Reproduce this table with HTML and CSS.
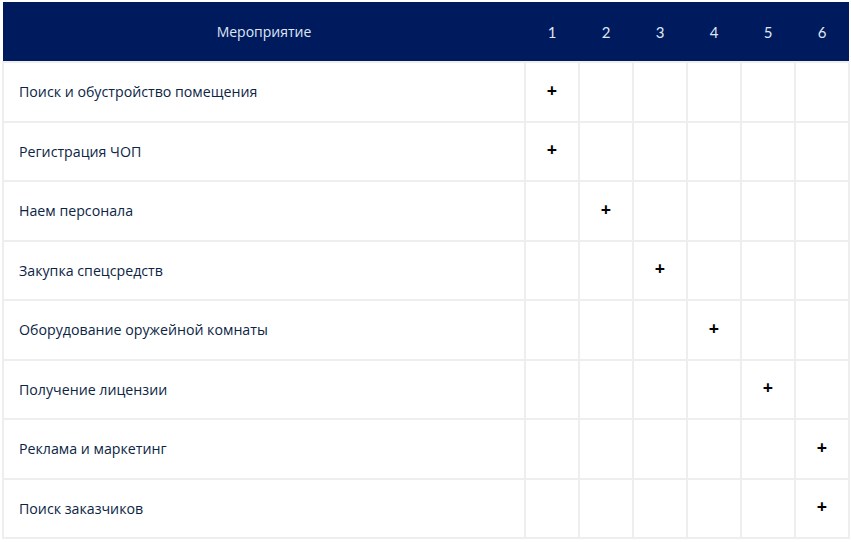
FILE: index.html
```html
<!DOCTYPE html>
<html lang="ru">
<head>
<meta charset="utf-8">
<link rel="stylesheet" href="styles.css">
</head>
<body>
<table class="plan">
  <thead>
    <tr>
      <th class="name-col">Мероприятие</th>
      <th>1</th><th>2</th><th>3</th><th>4</th><th>5</th><th>6</th>
    </tr>
  </thead>
  <tbody>
    <tr><td class="name">Поиск и обустройство помещения</td><td class="mark">+</td><td></td><td></td><td></td><td></td><td></td></tr>
    <tr><td class="name">Регистрация ЧОП</td><td class="mark">+</td><td></td><td></td><td></td><td></td><td></td></tr>
    <tr><td class="name">Наем персонала</td><td></td><td class="mark">+</td><td></td><td></td><td></td><td></td></tr>
    <tr><td class="name">Закупка спецсредств</td><td></td><td></td><td class="mark">+</td><td></td><td></td><td></td></tr>
    <tr><td class="name">Оборудование оружейной комнаты</td><td></td><td></td><td></td><td class="mark">+</td><td></td><td></td></tr>
    <tr><td class="name">Получение лицензии</td><td></td><td></td><td></td><td></td><td class="mark">+</td><td></td></tr>
    <tr><td class="name">Реклама и маркетинг</td><td></td><td></td><td></td><td></td><td></td><td class="mark">+</td></tr>
    <tr><td class="name">Поиск заказчиков</td><td></td><td></td><td></td><td></td><td></td><td class="mark">+</td></tr>
  </tbody>
</table>
</body>
</html>
```
FILE: styles.css
```css
html, body {
  margin: 0;
  padding: 0;
  background: #ffffff;
}
body {
  padding: 2px;
  font-family: "Open Sans", "Noto Sans", sans-serif;
}
.plan {
  border-collapse: collapse;
  width: 847px;
  table-layout: fixed;
}
.plan th {
  background: #001a5e;
  color: #dfe7f4;
  font-weight: 400;
  font-size: 15px;
  height: 59px;
  padding: 0;
  text-align: center;
  width: 54px;
  border: none;
  font-family: "Lato", "Open Sans", sans-serif;
}
.plan th.name-col {
  width: 522px;
  font-family: "Open Sans", sans-serif;
  font-size: 14px;
}
.plan td {
  border: 2px solid #eeeeee;
  height: 55.5px;
  box-sizing: border-box;
  padding: 0;
  text-align: center;
}
.plan tbody tr {
  height: 59.5px;
}
.plan td.name {
  text-align: left;
  padding-left: 15px;
  color: #0b2545;
  font-size: 14.2px;
}
.plan td.mark {
  color: #000000;
  font-weight: 700;
  font-size: 18px;
  padding-bottom: 4px;
}
```
